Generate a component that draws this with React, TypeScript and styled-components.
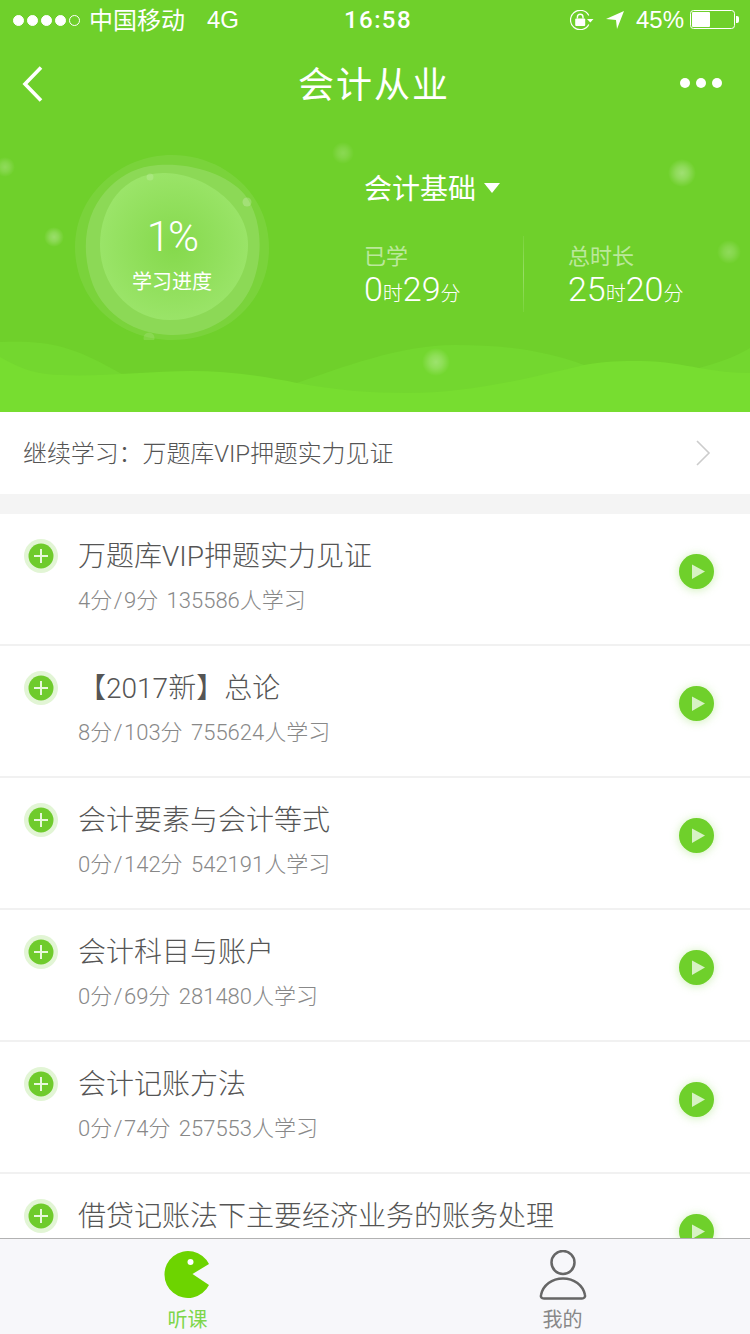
import React from 'react';
import styled, { createGlobalStyle } from 'styled-components';

const GlobalStyle = createGlobalStyle`
  html, body {
    margin: 0;
    padding: 0;
    background: #fff;
    font-family: "Liberation Sans", "Noto Sans CJK SC", sans-serif;
  }
  * { box-sizing: border-box; }
`;

// styled-components
const Page = styled.div`
  width: 750px;
  height: 1334px;
  display: flex;
  flex-direction: column;
  overflow: hidden;
  background: #fff;
`;

const Hero = styled.header`
  position: relative;
  flex: none;
  height: 412px;
  background: #6fd02b;
  color: #fff;
  overflow: hidden;
`;

const HeroDecor = styled.svg`
  position: absolute;
  left: 0;
  top: 0;
`;

const StatusBar = styled.div`
  position: relative;
  height: 40px;
  padding: 0 11px 0 13px;
  display: grid;
  grid-template-columns: 1fr auto 1fr;
  align-items: center;
  font-size: 24px;
`;

const StatusLeft = styled.div`
  display: flex;
  align-items: center;
`;

const SignalDots = styled.div`
  display: flex;
  gap: 3px;
  margin-right: 9px;
`;

const SignalDot = styled.span<{ $on: boolean }>`
  width: 11px;
  height: 11px;
  border-radius: 50%;
  border: 1px solid #fff;
  background: ${(props) => (props.$on ? '#fff' : 'transparent')};
`;

const Carrier = styled.span`
  margin-bottom: 3px;
`;

const Network = styled.span`
  margin-left: 22px;
`;

const Clock = styled.span`
  margin-left: 4px;
  font-family: Roboto, "Liberation Sans", sans-serif;
  font-weight: 500;
  letter-spacing: 1.4px;
`;

const StatusRight = styled.div`
  display: flex;
  align-items: center;
  justify-content: flex-end;
`;

const LocationIcon = styled.svg`
  margin-left: 12px;
`;

const Percent = styled.span`
  margin: 0 6px 0 12px;
`;

const NavBar = styled.nav`
  position: relative;
  height: 88px;
  padding: 0 28px 0 22px;
  display: grid;
  grid-template-columns: 1fr auto 1fr;
  align-items: center;
`;

const NavTitle = styled.h1`
  margin: 0 0 4px 4px;
  font-size: 36px;
  font-weight: 400;
  letter-spacing: 2px;
`;

const MoreDots = styled.div`
  display: flex;
  justify-content: flex-end;
  gap: 6px;
  margin-bottom: 2px;
`;

const MoreDot = styled.span`
  width: 10px;
  height: 10px;
  border-radius: 50%;
  background: #fff;
`;

const Summary = styled.section`
  position: relative;
  padding: 27px 0 0 75px;
  display: flex;
`;

const Ring = styled.div`
  position: relative;
  width: 194px;
  height: 185px;
  display: flex;
  flex-direction: column;
  align-items: center;
`;

const RingArt = styled.svg`
  position: absolute;
  left: 0;
  top: 0;
`;

const RingValue = styled.div`
  position: relative;
  margin-top: 58px;
  font-family: Roboto, "Liberation Sans", sans-serif;
  font-size: 42px;
  font-weight: 300;
  line-height: 48px;
  letter-spacing: -2px;
`;

const RingLabel = styled.div`
  position: relative;
  margin-top: 7px;
  font-size: 20px;
  line-height: 28px;
`;

const Info = styled.div`
  margin: 13px 0 0 95px;
`;

const SubjectPicker = styled.div`
  display: flex;
  align-items: center;
  height: 38px;
  font-size: 28px;
`;

const Caret = styled.span`
  margin: 2px 0 0 8px;
  width: 0;
  height: 0;
  border-left: 8.5px solid transparent;
  border-right: 8.5px solid transparent;
  border-top: 10px solid #fff;
`;

const Stats = styled.div`
  margin-top: 30px;
  display: grid;
  grid-template-columns: 159px 1px 1fr;
  height: 76px;
`;

const Stat = styled.div`
  padding-top: 6px;
  &:last-child {
    padding-left: 44px;
  }
`;

const StatLabel = styled.div`
  font-size: 22px;
  line-height: 30px;
  color: rgba(255, 255, 255, 0.55);
`;

const StatValue = styled.div`
  display: flex;
  align-items: baseline;
  margin-top: -1px;
  font-family: Roboto, "Liberation Sans", sans-serif;
  font-size: 34px;
  font-weight: 300;
  line-height: 36px;
  white-space: nowrap;
`;

const StatUnit = styled.span`
  font-family: "Noto Sans CJK SC", sans-serif;
  font-size: 20px;
  line-height: 20px;
`;

const StatDivider = styled.div`
  background: linear-gradient(rgba(255, 255, 255, 0.08), rgba(255, 255, 255, 0.28), rgba(255, 255, 255, 0.08));
`;

const ContinueBar = styled.div`
  flex: none;
  height: 82px;
  padding: 0 39px 0 23px;
  display: flex;
  align-items: center;
  justify-content: space-between;
  background: #fff;
  font-family: Roboto, "Noto Sans CJK SC", sans-serif;
  font-size: 24px;
  font-weight: 300;
  letter-spacing: -0.1px;
  color: #555;
`;

const ContinueText = styled.span`
  margin-bottom: 3px;
`;

const Spacer = styled.div`
  flex: none;
  height: 20px;
  background: #f4f4f4;
`;

const LessonList = styled.ul`
  flex: 1;
  min-height: 0;
  margin: 0;
  padding: 0;
  list-style: none;
  overflow: hidden;
`;

const LessonRow = styled.li`
  height: 132px;
  padding: 25px 36px 0 24px;
  display: flex;
  align-items: flex-start;
  border-bottom: 2px solid #f1f1f1;
`;

const AddIcon = styled.svg`
  flex: none;
`;

const LessonText = styled.div`
  flex: 1;
  margin-left: 20px;
  font-family: Roboto, "Noto Sans CJK SC", sans-serif;
  font-weight: 300;
`;

const LessonTitle = styled.div`
  font-size: 28px;
  line-height: 36px;
  color: #555;
`;

const LessonMeta = styled.div`
  margin-top: 10px;
  font-size: 22px;
  line-height: 32px;
  word-spacing: 3px;
  color: #888;
`;

const MetaSlash = styled.span`
  padding: 0 1.5px;
`;

const PlayIcon = styled.svg`
  flex: none;
  margin-top: 15px;
  filter: drop-shadow(0 1px 5px rgba(111, 208, 43, 0.35));
`;

const TabBar = styled.footer`
  flex: none;
  height: 96px;
  display: grid;
  grid-template-columns: 1fr 1fr;
  background: #f7f7fa;
  border-top: 1px solid #b2b2b2;
`;

const Tab = styled.div<{ $active?: boolean }>`
  display: flex;
  flex-direction: column;
  align-items: center;
  padding-top: 11px;
  font-size: 20px;
  line-height: 28px;
  color: ${(props) => (props.$active ? '#7ed64a' : '#888')};
`;

const TabIcon = styled.svg`
  display: block;
  margin-bottom: 6px;
`;

const lessons = [
  { title: '万题库VIP押题实力见证', done: '4分', total: '9分', learners: '135586人学习' },
  { title: '【2017新】总论', done: '8分', total: '103分', learners: '755624人学习' },
  { title: '会计要素与会计等式', done: '0分', total: '142分', learners: '542191人学习' },
  { title: '会计科目与账户', done: '0分', total: '69分', learners: '281480人学习' },
  { title: '会计记账方法', done: '0分', total: '74分', learners: '257553人学习' },
  { title: '借贷记账法下主要经济业务的账务处理' },
];

const bubbles = [
  { x: 5, y: 167, r: 10, o: 0.3 },
  { x: 54, y: 237, r: 10, o: 0.4 },
  { x: 343, y: 153, r: 11, o: 0.25 },
  { x: 682, y: 173, r: 14, o: 0.45 },
  { x: 729, y: 252, r: 12, o: 0.3 },
  { x: 436, y: 362, r: 14, o: 0.4 },
];

function HeroBackground() {
  return (
    <HeroDecor width="750" height="412" viewBox="0 0 750 412">
      <defs>
        <radialGradient id="bubble">
          <stop offset="0%" stopColor="#fff" stopOpacity="0.75" />
          <stop offset="45%" stopColor="#fff" stopOpacity="0.5" />
          <stop offset="100%" stopColor="#fff" stopOpacity="0" />
        </radialGradient>
      </defs>
      <path
        d="M0 342C24 341 46 342 62 347C84 353 100 362 120 373C158 394 195 398 225 397C252 396 274 391 297 383C340 368 400 345 455 345C510 345 548 352 584 365C605 372 625 373 646 373C665 373 682 372 699 368C718 363 735 357 750 348V412H0Z"
        fill="#73d72f"
      />
      <path
        d="M0 357C22 370 40 375 62 375C100 377 150 371 191 371C228 371 262 376 297 383C335 390 370 393 407 393C470 393 530 378 584 365C605 361 622 361 641 361C665 361 682 365 699 368C716 371 733 373 750 373V412H0Z"
        fill="#77dd30"
      />
      {bubbles.map((b) => (
        <circle key={`${b.x}-${b.y}`} cx={b.x} cy={b.y} r={b.r} fill="url(#bubble)" opacity={b.o} />
      ))}
    </HeroDecor>
  );
}

function ProgressRing() {
  return (
    <RingArt width="194" height="185" viewBox="75 155 194 185">
      <defs>
        <radialGradient id="core" cx="50%" cy="50%" r="55%">
          <stop offset="0%" stopColor="#85d94c" />
          <stop offset="100%" stopColor="#9ce56b" />
        </radialGradient>
      </defs>
      <path
        d="M172 155C222 155 269 192 269 248C269 303 225 340 172 340C118 340 75 300 75 247C75 195 120 155 172 155Z"
        fill="#fff"
        fillOpacity="0.08"
      />
      <path
        d="M150 166C180 161 225 170 245 195C262 218 264 255 252 285C238 318 205 336 170 335C135 334 105 315 93 285C80 250 85 215 105 192C118 177 133 169 150 166Z"
        fill="#fff"
        fillOpacity="0.14"
      />
      <path
        d="M165 173C205 174 248 205 248 245C248 285 215 320 170 320C130 320 100 285 100 245C100 205 125 172 165 173Z"
        fill="url(#core)"
      />
      <circle cx="247" cy="202" r="4.5" fill="#fff" fillOpacity="0.2" />
      <circle cx="150" cy="177" r="3.5" fill="#fff" fillOpacity="0.15" />
      <circle cx="149" cy="338" r="5.5" fill="#fff" fillOpacity="0.12" />
    </RingArt>
  );
}

function App() {
  return (
    <Page>
      <GlobalStyle />
      <Hero>
        <HeroBackground />
        <StatusBar>
          <StatusLeft>
            <SignalDots>
              {[true, true, true, true, false].map((on, i) => (
                <SignalDot key={i} $on={on} />
              ))}
            </SignalDots>
            <Carrier>中国移动</Carrier>
            <Network>4G</Network>
          </StatusLeft>
          <Clock>16:58</Clock>
          <StatusRight>
            <svg width="24" height="20" viewBox="0 0 24 20">
              <path d="M18.8 14.5A9.7 9.7 0 1 1 18.8 5.5" fill="none" stroke="#fff" strokeWidth="1.2" />
              <path d="M17 9h6.5l-3.2 3.4z" fill="#fff" />
              <rect x="5.2" y="8.5" width="10" height="7.5" rx="1" fill="#fff" />
              <path d="M7.4 8.5V7a2.8 2.8 0 0 1 5.6 0v1.5" fill="none" stroke="#fff" strokeWidth="1.4" />
            </svg>
            <LocationIcon width="18" height="18" viewBox="0 0 18 18">
              <path d="M18 0L0 8L10 9L11 18Z" fill="#fff" />
            </LocationIcon>
            <Percent>45%</Percent>
            <svg width="49" height="20" viewBox="0 0 49 20">
              <rect x="0.5" y="0.5" width="44" height="18" rx="3" fill="none" stroke="#fff" />
              <rect x="2" y="2" width="18" height="15" rx="1" fill="#fff" />
              <path d="M46 6h1a2 2 0 0 1 2 2v3a2 2 0 0 1-2 2h-1z" fill="#fff" />
            </svg>
          </StatusRight>
        </StatusBar>
        <NavBar>
          <svg width="22" height="38" viewBox="0 0 22 38">
            <path d="M19 2.5L3 19L19 35.5" fill="none" stroke="#fff" strokeWidth="3.6" />
          </svg>
          <NavTitle>会计从业</NavTitle>
          <MoreDots>
            <MoreDot />
            <MoreDot />
            <MoreDot />
          </MoreDots>
        </NavBar>
        <Summary>
          <Ring>
            <ProgressRing />
            <RingValue>1%</RingValue>
            <RingLabel>学习进度</RingLabel>
          </Ring>
          <Info>
            <SubjectPicker>
              会计基础
              <Caret />
            </SubjectPicker>
            <Stats>
              <Stat>
                <StatLabel>已学</StatLabel>
                <StatValue>
                  0<StatUnit>时</StatUnit>29<StatUnit>分</StatUnit>
                </StatValue>
              </Stat>
              <StatDivider />
              <Stat>
                <StatLabel>总时长</StatLabel>
                <StatValue>
                  25<StatUnit>时</StatUnit>20<StatUnit>分</StatUnit>
                </StatValue>
              </Stat>
            </Stats>
          </Info>
        </Summary>
      </Hero>
      <ContinueBar>
        <ContinueText>继续学习：万题库VIP押题实力见证</ContinueText>
        <svg width="16" height="26" viewBox="0 0 16 26">
          <path d="M2 1L14 13L2 25" fill="none" stroke="#ccc" strokeWidth="1.6" />
        </svg>
      </ContinueBar>
      <Spacer />
      <LessonList>
        {lessons.map((lesson) => (
          <LessonRow key={lesson.title}>
            <AddIcon width="34" height="34" viewBox="0 0 34 34">
              <circle cx="17" cy="17" r="17" fill="#e2f5d5" />
              <circle cx="17" cy="17" r="12.5" fill="#6fcb2c" />
              <path d="M10 17H24M17 10V24" stroke="#e8f8dc" strokeWidth="2" />
            </AddIcon>
            <LessonText>
              <LessonTitle>{lesson.title}</LessonTitle>
              {lesson.done && (
                <LessonMeta>
                  {lesson.done}
                  <MetaSlash>/</MetaSlash>
                  {lesson.total} {lesson.learners}
                </LessonMeta>
              )}
            </LessonText>
            <PlayIcon width="35" height="35" viewBox="0 0 35 35">
              <circle cx="17.5" cy="17.5" r="17.5" fill="#6fd02b" />
              <path d="M13 10.5L26 17.5L13 25Z" fill="#fff" fillOpacity="0.72" />
            </PlayIcon>
          </LessonRow>
        ))}
      </LessonList>
      <TabBar>
        <Tab $active>
          <TabIcon width="48" height="50" viewBox="0 0 48 50">
            <path d="M45 14A23.5 23.5 0 1 0 45 35L28.5 24Z" fill="#6dd400" />
            <circle cx="26.5" cy="12" r="3" fill="#fff" />
          </TabIcon>
          听课
        </Tab>
        <Tab>
          <TabIcon width="48" height="50" viewBox="0 0 48 50">
            <circle cx="24" cy="12.5" r="11.5" fill="none" stroke="#666" strokeWidth="2.5" />
            <path
              d="M5 48.5C2.5 48.5 1.5 47 2 45C4 35 13 28.5 24 28.5C35 28.5 44 35 46 45C46.5 47 45 48.5 43 48.5Z"
              fill="none"
              stroke="#666"
              strokeWidth="2.5"
            />
          </TabIcon>
          我的
        </Tab>
      </TabBar>
    </Page>
  );
}

export default App;
